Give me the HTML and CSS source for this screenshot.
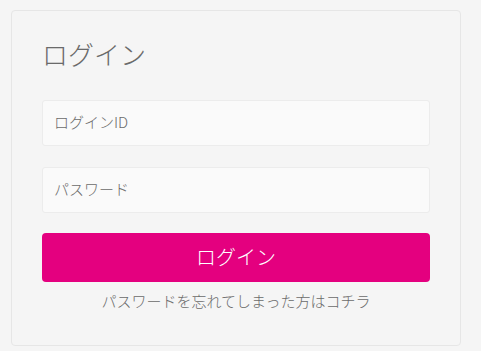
FILE: index.html
```html
<!DOCTYPE html>
<html lang="ja">
<head>
<meta charset="utf-8">
<link rel="stylesheet" href="styles.css">
</head>
<body>
<div class="card">
  <h1 class="title">ログイン</h1>
  <form class="form">
    <input class="field" type="text" placeholder="ログインID">
    <input class="field" type="password" placeholder="パスワード">
    <button class="btn" type="button">ログイン</button>
    <a class="forgot" href="#">パスワードを忘れてしまった方はコチラ</a>
  </form>
</div>
</body>
</html>
```
FILE: styles.css
```css
html, body {
  margin: 0;
  padding: 0;
  background: #f5f5f5;
}
body {
  padding: 10px 0 0 11px;
  font-family: "Noto Sans CJK JP", "Noto Sans", sans-serif;
  color: #666;
}
.card {
  box-sizing: border-box;
  width: 450px;
  height: 336px;
  border: 1px solid #e6e6e6;
  border-radius: 4px;
  background: #f5f5f5;
  padding: 28px 30px 0 30px;
}
.title {
  margin: 0;
  font-size: 26px;
  line-height: 30px;
  font-weight: 300;
  color: #6a6a6a;
}
.form {
  display: flex;
  flex-direction: column;
  margin-top: 31px;
}
.field {
  box-sizing: border-box;
  height: 46px;
  width: 100%;
  border: 1px solid #ececec;
  border-radius: 3px;
  background: #fafafa;
  padding: 0 11px 4px 11px;
  font-family: inherit;
  font-size: 15px;
  font-weight: 300;
  color: #666;
  margin-bottom: 21px;
  outline: none;
}
.field::placeholder {
  color: #6a6a6a;
}
.field + .field {
  margin-bottom: 20px;
}
.btn {
  height: 49px;
  width: 100%;
  border: none;
  border-radius: 4px;
  background: #e4007f;
  color: #fff;
  font-family: inherit;
  font-size: 20px;
  font-weight: 300;
  padding: 0 0 2px 0;
  cursor: pointer;
}
.forgot {
  margin-top: 9px;
  text-align: center;
  font-size: 15px;
  font-weight: 300;
  line-height: 20px;
  color: #6a6a6a;
  text-decoration: none;
}
```
